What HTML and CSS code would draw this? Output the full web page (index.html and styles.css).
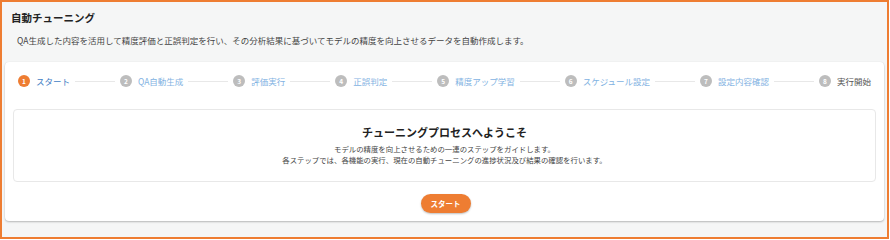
FILE: index.html
```html
<!DOCTYPE html>
<html lang="ja">
<head>
<meta charset="utf-8">
<link rel="stylesheet" href="styles.css">
</head>
<body>
<div class="frame">
  <header class="header">
    <h1 class="title">自動チューニング</h1>
    <p class="desc">QA生成した内容を活用して精度評価と正誤判定を行い、その分析結果に基づいてモデルの精度を向上させるデータを自動作成します。</p>
  </header>
  <section class="card">
    <div class="stepper">
      <div class="step active"><span class="num">1</span><span class="label">スタート</span></div>
      <div class="line"></div>
      <div class="step"><span class="num">2</span><span class="label">QA自動生成</span></div>
      <div class="line"></div>
      <div class="step"><span class="num">3</span><span class="label">評価実行</span></div>
      <div class="line"></div>
      <div class="step"><span class="num">4</span><span class="label">正誤判定</span></div>
      <div class="line"></div>
      <div class="step"><span class="num">5</span><span class="label">精度アップ学習</span></div>
      <div class="line"></div>
      <div class="step"><span class="num">6</span><span class="label">スケジュール設定</span></div>
      <div class="line"></div>
      <div class="step"><span class="num">7</span><span class="label">設定内容確認</span></div>
      <div class="line"></div>
      <div class="step last"><span class="num">8</span><span class="label">実行開始</span></div>
    </div>
    <div class="welcome">
      <h2 class="welcome-title">チューニングプロセスへようこそ</h2>
      <p class="welcome-text">モデルの精度を向上させるための一連のステップをガイドします。<br>各ステップでは、各機能の実行、現在の自動チューニングの進捗状況及び結果の確認を行います。</p>
    </div>
    <div class="actions">
      <button class="btn">スタート</button>
    </div>
  </section>
</div>
</body>
</html>
```
FILE: styles.css
```css
* { box-sizing: border-box; }
html, body { margin: 0; padding: 0; }
body {
  width: 890px;
  height: 240px;
  font-family: "Noto Sans CJK JP", "Noto Sans", sans-serif;
  background: #ffffff;
}
.frame {
  width: 889px;
  height: 239px;
  border: 2px solid #ee7d32;
  background: #f5f6f6;
  padding: 0 3px 0 3px;
  overflow: hidden;
}
.header {
  padding: 9px 0 0 6px;
  height: 60px;
}
.title {
  margin: 0;
  font-size: 10.5px;
  line-height: 14px;
  font-weight: 700;
  color: #222;
}
.desc {
  margin: 9px 0 0 6px;
  font-size: 8.5px;
  line-height: 12px;
  color: #444;
}
.card {
  background: #fff;
  border-radius: 4px;
  box-shadow: 0 1px 2px rgba(0,0,0,0.25), 0 0 1px rgba(0,0,0,0.08);
  padding: 13px 8px 8px 8px;
  width: 879px;
}
.stepper {
  display: flex;
  align-items: center;
  padding: 0 5px 0 5px;
  height: 12px;
}
.step {
  display: flex;
  align-items: center;
  gap: 6px;
  flex: none;
}
.num {
  width: 12px;
  height: 12px;
  border-radius: 50%;
  background: #bdbdbd;
  color: #fff;
  font-size: 6.5px;
  font-weight: 700;
  display: flex;
  align-items: center;
  justify-content: center;
  line-height: 1;
}
.label {
  font-size: 8.5px;
  color: #82b2e2;
  line-height: 12px;
  white-space: nowrap;
}
.step.active .num { background: #ee7d32; }
.step.active .label { color: #3f7dc4; }
.step.last .label { color: #555; }
.line {
  flex: 1;
  height: 1px;
  background: #e8e8e8;
  margin: 0 5px;
}
.welcome {
  margin-top: 22px;
  border: 1px solid #e8e8e8;
  border-radius: 4px;
  height: 73px;
  padding-top: 14px;
  text-align: center;
}
.welcome-title {
  margin: 0;
  font-size: 11px;
  line-height: 16px;
  font-weight: 700;
  color: #222;
}
.welcome-text {
  margin: 3px 0 0;
  font-size: 7.4px;
  line-height: 11px;
  color: #444;
}
.actions {
  display: flex;
  justify-content: center;
  margin-top: 12px;
}
.btn {
  margin-left: 2px;
  width: 50px;
  height: 19px;
  border: none;
  border-radius: 10px;
  background: #ee7d32;
  color: #fff;
  font-family: inherit;
  font-size: 7.5px;
  font-weight: 700;
  box-shadow: 0 1px 2px rgba(0,0,0,0.25);
  padding: 0;
}
```
